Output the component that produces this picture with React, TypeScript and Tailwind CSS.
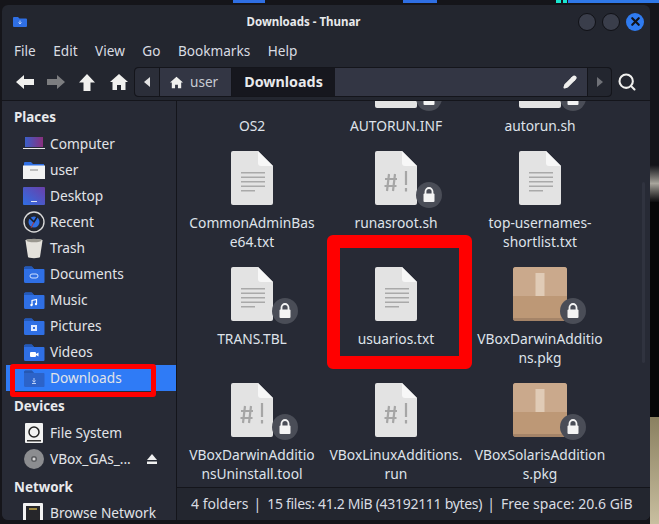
import React from 'react';
import { Search, Pencil, X } from 'lucide-react';

const FONT = 'font-["Noto_Sans",sans-serif]';

// sidebar folder, with a small glyph drawn on its front
const Folder = ({ children, dim }: { children?: React.ReactNode; dim?: boolean }) => (
  <svg width="22" height="20" viewBox="0 0 22 20" className="shrink-0">
    <path d="M1 4a1.5 1.5 0 0 1 1.5-1.5h6L11 5h9.5a1 1 0 0 1 1 1v12a1 1 0 0 1-1 1h-18A1.5 1.5 0 0 1 1 17.5z" fill={dim ? '#2c63c9' : '#2f6fe4'} />
    <path d="M1 5h10l-2-2.5H2.5A1.5 1.5 0 0 0 1 4z" fill={dim ? '#2558b4' : '#2358b8'} />
    {children}
  </svg>
);

const PlaceIcon = ({ name }: { name: string }) => {
  if (name === 'Computer') {
    return (
      <svg width="22" height="20" viewBox="0 0 22 20" className="shrink-0">
        <defs>
          <linearGradient id="cmp" x1="0" x2="1">
            <stop offset="0" stopColor="#3a5fc9" />
            <stop offset="1" stopColor="#8a2f7d" />
          </linearGradient>
        </defs>
        <rect x="2" y="3" width="18" height="10" fill="url(#cmp)" />
        <rect x="0" y="14" width="22" height="1" fill="#e8e8e8" />
      </svg>
    );
  }
  if (name === 'user') {
    return (
      <svg width="22" height="20" viewBox="0 0 22 20" className="shrink-0">
        <path d="M1 3a1 1 0 0 1 1-1h6l2 2h11v2H1z" fill="#2f6fe4" />
        <path d="M0 5.5h22V19H0z" fill="#f2f2f2" />
        <rect x="7" y="9" width="8" height="2" fill="#bdbdbd" />
      </svg>
    );
  }
  if (name === 'Desktop') {
    return (
      <svg width="22" height="20" viewBox="0 0 22 20" className="shrink-0">
        <defs>
          <linearGradient id="dsk" x1="0" x2="1" y1="1" y2="0">
            <stop offset="0" stopColor="#2f6fe4" />
            <stop offset="1" stopColor="#6b3fa8" />
          </linearGradient>
        </defs>
        <rect x="0" y="1" width="22" height="18" rx="1" fill="url(#dsk)" />
        <rect x="8" y="15" width="6" height="1" fill="#dfe6f5" />
      </svg>
    );
  }
  if (name === 'Recent') {
    return (
      <svg width="22" height="22" viewBox="0 0 22 22" className="shrink-0">
        <circle cx="11" cy="11" r="10" fill="#23262f" stroke="#d8d8d8" strokeWidth="1.4" />
        <circle cx="11" cy="11" r="5.5" fill="#2f6fe4" />
        <path d="M6 6l5 5 3-5" fill="none" stroke="#1b1d25" strokeWidth="1.5" />
        <path d="M11 11l-3 6" stroke="#b03030" strokeWidth="1" />
      </svg>
    );
  }
  if (name === 'Trash') {
    return (
      <svg width="20" height="22" viewBox="0 0 20 22" className="shrink-0 ml-[1px]">
        <path d="M1.5 3.5C1.5 1.5 18.5 1.5 18.5 3.5L16 20c-.3 1.5-11.7 1.5-12 0z" fill="#e4e2dc" />
        <ellipse cx="10" cy="3.5" rx="7.5" ry="1.8" fill="#9a9890" />
      </svg>
    );
  }
  if (name === 'Documents') {
    return (
      <Folder>
        <rect x="7" y="10" width="8" height="4" rx="2" fill="none" stroke="#cfe0ff" strokeWidth="1" />
      </Folder>
    );
  }
  if (name === 'Music') {
    return (
      <Folder>
        <path d="M9 15v-4.5l4.5-1V14" fill="none" stroke="#fff" strokeWidth="1.2" />
        <circle cx="8.5" cy="15" r="1.2" fill="#fff" />
        <circle cx="13" cy="14" r="1.2" fill="#fff" />
      </Folder>
    );
  }
  if (name === 'Pictures') {
    return (
      <Folder>
        <rect x="8" y="9" width="6" height="6" fill="#dfe9ff" />
        <rect x="10" y="11" width="2" height="2" fill="#2f6fe4" />
      </Folder>
    );
  }
  if (name === 'Videos') {
    return (
      <Folder>
        <rect x="7" y="10" width="6" height="5" rx="1" fill="#fff" />
        <path d="M13 12l2.5-1.5v4L13 13z" fill="#fff" />
      </Folder>
    );
  }
  return (
    <Folder dim>
      <path d="M11 10v4M9.5 12.5L11 14.3l1.5-1.8M9 15.5h4" fill="none" stroke="#b9cff7" strokeWidth="1" />
    </Folder>
  );
};

const SideRow = ({ label, icon, active, eject }: { label: string; icon: React.ReactNode; active?: boolean; eject?: boolean }) => (
  <div className={`h-[26px] flex items-center pl-[17px] pr-[19px] ${active ? 'bg-[#2f7bf6]' : ''}`}>
    <div className="w-[26px] h-[22px] flex items-center justify-start shrink-0">{icon}</div>
    <span className="ml-[1px] text-[13.7px] text-[#e2e4e8] whitespace-nowrap">{label}</span>
    {eject && (
      <svg width="10" height="10" viewBox="0 0 10 10" className="ml-auto">
        <path d="M5 0l5 6H0z" fill="#f0f0f0" />
        <rect y="7.5" width="10" height="2.5" fill="#f0f0f0" />
      </svg>
    )}
  </div>
);

const Heading = ({ children, className = '' }: { children: React.ReactNode; className?: string }) => (
  <div className={`pl-[8px] pt-[2px] text-[13.4px] font-bold text-[#e8e9ec] flex items-center ${className}`}>{children}</div>
);

const Lock = () => (
  <div className="absolute -right-[19px] bottom-[-3px] w-[26px] h-[26px] rounded-full bg-[#4a4d57] flex items-center justify-center">
    <svg width="14" height="16" viewBox="0 0 14 16">
      <path d="M3.5 7V4.5a3.5 3.5 0 0 1 7 0V7" fill="none" stroke="#f4f4f4" strokeWidth="1.8" />
      <rect x="1.5" y="6.5" width="11" height="8.5" rx="1" fill="#f4f4f4" />
    </svg>
  </div>
);

// white document sheet: text lines or the script "#!" mark
const DocIcon = ({ kind }: { kind: 'text' | 'script' }) => (
  <svg width="42" height="54" viewBox="0 0 42 54" className="block">
    <path d="M2 0h25l15 15v37a2 2 0 0 1-2 2H2a2 2 0 0 1-2-2V2a2 2 0 0 1 2-2z" fill="#e3e3e3" />
    <path d="M27 0l15 15H30a3 3 0 0 1-3-3z" fill="#f7f7f7" />
    {kind === 'text' ? (
      <g fill="#a9a9a9">
        <rect x="10" y="21" width="24" height="1.5" />
        <rect x="10" y="25.5" width="24" height="1.5" />
        <rect x="10" y="30" width="24" height="1.5" />
        <rect x="10" y="34.5" width="24" height="1.5" />
        <rect x="10" y="39" width="14" height="1.5" />
      </g>
    ) : (
      <g fill="none" stroke="#a6a6a6" strokeWidth="2.2">
        <path d="M14 23l-2 17M20 23l-2 17M10 28h12M9.5 35h12" />
        <path d="M31 20v14M31 37v3.5" />
      </g>
    )}
  </svg>
);

const BoxIcon = () => (
  <svg width="54" height="54" viewBox="0 0 54 54" className="block">
    <rect width="54" height="54" rx="3" fill="#bd9876" />
    <path d="M0 3a3 3 0 0 1 3-3h48a3 3 0 0 1 3 3v26H0z" fill="#caa98c" />
    <path d="M0 51h54a3 3 0 0 1-3 3H3a3 3 0 0 1-3-3z" fill="#a58468" />
    <rect x="22.5" y="6" width="9" height="23" fill="#e0cbb6" />
  </svg>
);

const FolderBig = () => (
  <svg width="54" height="54" viewBox="0 0 54 54" className="block">
    <path d="M0 4h20l5 5h29v35H0z" fill="#2f6fe4" />
  </svg>
);

type Item = { name: string; kind: 'text' | 'script' | 'box' | 'folder'; lock?: boolean };

const items: Item[] = [
  { name: 'OS2', kind: 'folder' },
  { name: 'AUTORUN.INF', kind: 'text', lock: true },
  { name: 'autorun.sh', kind: 'script', lock: true },
  { name: 'CommonAdminBas\ne64.txt', kind: 'text' },
  { name: 'runasroot.sh', kind: 'script', lock: true },
  { name: 'top-usernames-\nshortlist.txt', kind: 'text' },
  { name: 'TRANS.TBL', kind: 'text', lock: true },
  { name: 'usuarios.txt', kind: 'text' },
  { name: 'VBoxDarwinAdditio\nns.pkg', kind: 'box', lock: true },
  { name: 'VBoxDarwinAdditio\nnsUninstall.tool', kind: 'script', lock: true },
  { name: 'VBoxLinuxAdditions.\nrun', kind: 'script' },
  { name: 'VBoxSolarisAddition\ns.pkg', kind: 'box', lock: true },
];

const FileCell = ({ item }: { item: Item }) => (
  <div className="flex flex-col items-center pb-[16px]">
    <div className="relative w-[54px] h-[54px] flex justify-center">
      {item.kind === 'box' ? <BoxIcon /> : item.kind === 'folder' ? <FolderBig /> : <DocIcon kind={item.kind} />}
      {item.lock && <Lock />}
    </div>
    <div className="mt-[8px] text-center text-[13.8px] leading-[19px] text-[#dfe3ea] whitespace-pre">{item.name}</div>
  </div>
);

const BigHome = ({ size }: { size: number }) => (
  <svg width={size} height={size} viewBox="0 0 18 18">
    <path d="M9 1l9 8h-2.5v8H11v-5H7v5H2.5V9H0z" fill="#f0f0ee" />
  </svg>
);

const places = ['Computer', 'user', 'Desktop', 'Recent', 'Trash', 'Documents', 'Music', 'Pictures', 'Videos'];

export default function App() {
  return (
    <div className={`relative w-[659px] h-[524px] overflow-hidden bg-[#15151a] pt-[5px] pl-[2px] ${FONT}`}>
      {/* wallpaper and panel bits around the window */}
      <div className="absolute top-0 left-[233px] w-[32px] h-[3px] bg-[#2f6fe4]" />
      <div className="absolute top-0 left-[403px] w-[34px] h-[3px] bg-[#2f6fe4]" />
      <div className="absolute top-0 left-[556px] w-[5px] h-[3px] bg-[#19e6d0]" />
      <div className="absolute top-0 left-[563px] w-[4px] h-[3px] bg-[#19e6d0]" />
      <div className="absolute top-0 left-[568px] w-[91px] h-[3px] bg-[#2f78e8]" />
      <div className="absolute top-[165px] right-0 w-[9px] h-[37px] bg-gradient-to-b from-[#15151a] via-[#a8a59c] to-[#0c0c0e]" />
      <div className="absolute top-[202px] right-0 w-[9px] h-[215px] bg-[#060607]" />
      <div className="absolute top-[417px] right-0 w-[9px] h-[107px] bg-gradient-to-b from-[#8a8060] to-[#c9bfa0]" />

      <div className="relative w-[648px] h-[515px] rounded-[6px] bg-[#23262f] flex flex-col overflow-hidden">
        {/* title bar */}
        <div className="h-[33px] flex items-center shrink-0 relative">
          <svg width="14" height="10" viewBox="0 0 14 10" className="ml-[11px]">
            <path d="M0 1a1 1 0 0 1 1-1h4l1.5 1.5H13a1 1 0 0 1 1 1V9a1 1 0 0 1-1 1H1a1 1 0 0 1-1-1z" fill="#2f6fe4" />
            <path d="M7 3.5v3M5.5 5.5L7 7l1.5-1.5" stroke="#b9cff7" fill="none" />
          </svg>
          <div className="flex-1 pl-[2px] text-center text-[11.5px] font-bold text-[#e8e9ec]">Downloads - Thunar</div>
          <div className="flex items-center gap-[6px] pr-[6px]">
            <div className="w-[18px] h-[18px] rounded-full bg-[#3a3e4b] border border-[#101116]" />
            <div className="w-[18px] h-[18px] rounded-full bg-[#3a3e4b] border border-[#101116]" />
            <div className="w-[18px] h-[18px] rounded-full bg-[#2f7bf0] flex items-center justify-center">
              <X size={13} strokeWidth={4} className="text-[#10121a]" />
            </div>
          </div>
        </div>

        {/* menu bar */}
        <div className="h-[26px] flex items-center gap-[17.5px] pl-[12px] text-[13.6px] text-[#d9dce2] shrink-0">
          <span>File</span>
          <span>Edit</span>
          <span>View</span>
          <span>Go</span>
          <span>Bookmarks</span>
          <span>Help</span>
        </div>

        {/* toolbar */}
        <div className="h-[37px] flex items-center pl-[14px] shrink-0 border-b border-[#14151b]">
          <svg width="18" height="14" viewBox="0 0 18 14">
            <path d="M0 7l8-7v4h10v6H8v4z" fill="#f0f0ee" />
          </svg>
          <svg width="18" height="14" viewBox="0 0 18 14" className="ml-[13px]">
            <path d="M18 7l-8-7v4H0v6h10v4z" fill="#7c7d80" />
          </svg>
          <svg width="16" height="17" viewBox="0 0 16 17" className="ml-[14px]">
            <path d="M8 0l8 8.5h-4.5V17h-7V8.5H0z" fill="#f0f0ee" />
          </svg>
          <div className="ml-[15px]">
            <BigHome size={18} />
          </div>
          <div className="ml-[6px] w-[478px] h-[30px] flex items-stretch rounded-[4px] border border-[#14151b] bg-[#16171e]">
            <div className="w-[25px] flex items-center justify-center bg-[#2b2e39] border-r border-[#14151b] rounded-l-[4px]">
              <svg width="6" height="10" viewBox="0 0 6 10">
                <path d="M0 5l6-5v10z" fill="#e4e4e4" />
              </svg>
            </div>
            <div className="w-[72px] flex items-center gap-[7px] pl-[10px] bg-[#333644] text-[13.6px] text-[#c9ccd3] border-r border-[#14151b]">
              <BigHome size={13} />
              <span>user</span>
            </div>
            <div className="w-[103px] flex items-center justify-center text-[14.3px] font-bold text-[#e8e9ec]">Downloads</div>
            <div className="flex-1 flex items-center justify-end pr-[10px] bg-[#333644]">
              <Pencil size={14} strokeWidth={2.5} fill="#f0f0ee" className="text-[#f0f0ee]" />
            </div>
            <div className="w-[24px] flex items-center justify-center bg-[#23262f] rounded-r-[4px] border-l border-[#14151b]">
              <svg width="6" height="10" viewBox="0 0 6 10">
                <path d="M6 5L0 0v10z" fill="#6f7177" />
              </svg>
            </div>
          </div>
          <Search size={20} strokeWidth={2.5} className="text-[#f0f0ee] ml-[5px]" />
        </div>

        <div className="flex flex-1 min-h-0 bg-[#272a35]">
          {/* sidebar */}
          <div className="w-[175px] pl-[4px] shrink-0 border-r border-[#14151b] overflow-hidden">
            <Heading className="h-[30px]">Places</Heading>
            {places.map((p) => (
              <SideRow key={p} label={p} icon={<PlaceIcon name={p} />} />
            ))}
            <SideRow label="Downloads" active icon={<PlaceIcon name="Downloads" />} />
            <Heading className="h-[29px]">Devices</Heading>
            <SideRow
              label="File System"
              icon={
                <svg width="18" height="20" viewBox="0 0 18 20" className="ml-[2px]">
                  <rect width="18" height="20" rx="1" fill="#f2f2f2" />
                  <circle cx="9" cy="9" r="5" fill="#f2f2f2" stroke="#222" strokeWidth="1.5" />
                  <rect x="2" y="17" width="14" height="1.5" fill="#333" />
                </svg>
              }
            />
            <SideRow
              label="VBox_GAs_..."
              eject
              icon={
                <svg width="20" height="20" viewBox="0 0 20 20" className="ml-[1px]">
                  <circle cx="10" cy="10" r="10" fill="#8c8d90" />
                  <circle cx="10" cy="10" r="3" fill="#5c5d60" />
                  <circle cx="10" cy="10" r="1.5" fill="#d8d8d8" />
                </svg>
              }
            />
            <Heading className="h-[28px]">Network</Heading>
            <SideRow
              label="Browse Network"
              icon={
                <svg width="20" height="20" viewBox="0 0 20 20">
                  <rect width="20" height="20" rx="1" fill="#f2f2f2" />
                  <rect x="3" y="3" width="14" height="14" fill="#26262a" />
                  <rect x="6" y="5" width="8" height="2" fill="#a08a40" />
                </svg>
              }
            />
          </div>

          {/* file grid, scrolled so that the first row is cut off */}
          <div className="flex-1 flex flex-col min-w-0">
            <div className="flex-1 overflow-hidden relative">
              <div className="grid grid-cols-3 w-[432px] ml-[3px] -mt-[47px]">
                {items.map((it) => (
                  <FileCell key={it.name} item={it} />
                ))}
              </div>
              {/* scrollbar */}
              <div className="absolute right-[5px] top-[81px] w-[3px] h-[181px] rounded-full bg-[#30333f]" />
            </div>
            <div className="h-[33px] shrink-0 border-t border-[#14151b] flex items-center pl-[14px] pb-[1px] text-[14px] text-[#d9dce2] whitespace-nowrap bg-[#23262f]">
              <span>4 folders</span>
              <span className="ml-[5px]">|</span>
              <span className="ml-[6px] tracking-[-0.3px]">15 files: 41.2 MiB (43192111 bytes)</span>
              <span className="ml-[5px]">|</span>
              <span className="ml-[6px]">Free space: 20.6 GiB</span>
            </div>
          </div>
        </div>
      </div>

      {/* red annotations drawn over the screenshot */}
      <div className="absolute left-[10px] top-[364px] w-[146px] h-[33px] border-[5px] border-[#ff0000] rounded-[3px]" />
      <div className="absolute left-[327px] top-[235px] w-[145px] h-[134px] border-[13px] border-[#ff0000] rounded-[6px]" />
    </div>
  );
}
